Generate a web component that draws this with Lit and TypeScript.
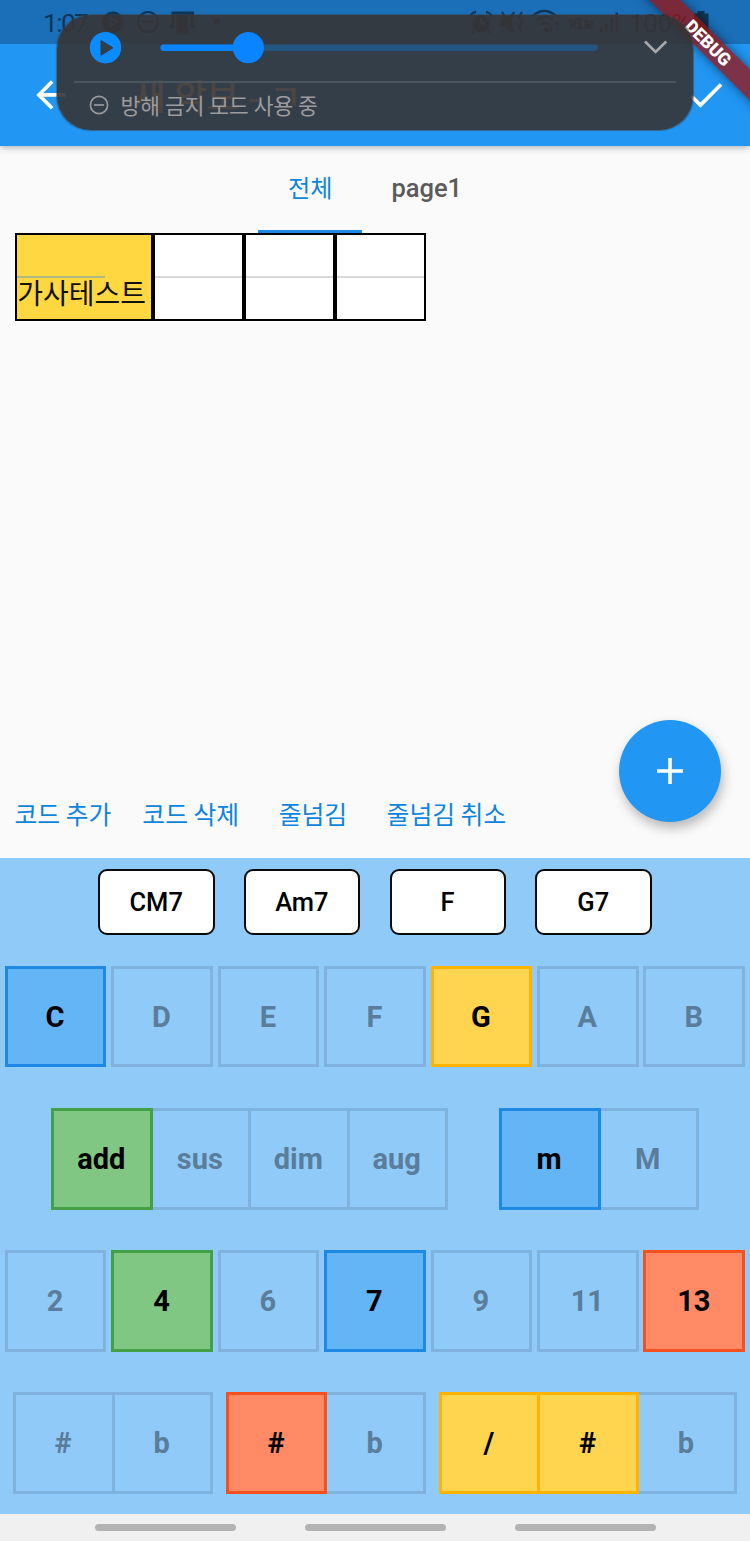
import { LitElement, html, css, svg } from "lit";
import { customElement, property } from "lit/decorators.js";
import { classMap } from "lit/directives/class-map.js";

type Tone = "off" | "blue" | "green" | "amber" | "red";
type KeyDef = [string, Tone];

const ROWS: KeyDef[][][] = [
  [[["C", "blue"]], [["D", "off"]], [["E", "off"]], [["F", "off"]], [["G", "amber"]], [["A", "off"]], [["B", "off"]]],
  [
    [["add", "green"], ["sus", "off"], ["dim", "off"], ["aug", "off"]],
    [["m", "blue"], ["M", "off"]],
  ],
  [[["2", "off"]], [["4", "green"]], [["6", "off"]], [["7", "blue"]], [["9", "off"]], [["11", "off"]], [["13", "red"]]],
  [
    [["#", "off"], ["b", "off"]],
    [["#", "red"], ["b", "off"]],
    [["/", "amber"], ["#", "amber"], ["b", "off"]],
  ],
];

@customElement("chord-keyboard")
export class ChordKeyboard extends LitElement {
  @property({ attribute: false }) presets: string[] = ["CM7", "Am7", "F", "G7"];

  static styles = css`
    :host {
      display: flex;
      flex-direction: column;
      box-sizing: border-box;
      height: 656px;
      padding-top: 11px;
      background: #90caf9;
      font-family: Roboto, sans-serif;
    }
    .presets {
      display: flex;
      justify-content: center;
      gap: 29.2px;
      margin-bottom: 30.6px;
    }
    .preset {
      box-sizing: border-box;
      width: 116.5px;
      height: 66px;
      padding-right: 0.6px;
      border: 2px solid #0a0a0a;
      border-radius: 9px;
      background: #fff;
      color: #000;
      font-size: 25.5px;
      font-weight: 500;
      line-height: 62px;
      text-align: center;
    }
    .row {
      display: flex;
      justify-content: space-evenly;
      margin-bottom: 40.4px;
    }
    .group {
      display: flex;
    }
    .key {
      box-sizing: border-box;
      width: 98.4px;
      height: 101.8px;
      padding-right: 1.2px;
      border: 3px solid;
      border-left-width: 0;
      font-size: 29px;
      font-weight: 700;
      line-height: 96px;
      text-align: center;
    }
    .key.first {
      width: 101.8px;
      border-left-width: 3px;
    }
    .off {
      border-color: #7fb2dd;
      color: #597d9a;
    }
    .blue {
      border-color: #1e88e5;
      background: #64b5f6;
    }
    .green {
      border-color: #43a047;
      background: #81c784;
    }
    .amber {
      border-color: #ffb300;
      background: #ffd54f;
    }
    .red {
      border-color: #f4511e;
      background: #ff8a65;
    }
  `;

  render() {
    return html`
      <div class="presets">${this.presets.map((p) => html`<div class="preset">${p}</div>`)}</div>
      ${ROWS.map(
        (row) => html`<div class="row">
          ${row.map(
            (group) => html`<div class="group">
              ${group.map(
                ([label, tone], i) =>
                  html`<div class=${classMap({ key: true, first: i === 0, [tone]: true })}>${label}</div>`
              )}
            </div>`
          )}
        </div>`
      )}
    `;
  }
}

@customElement("volume-panel")
export class VolumePanel extends LitElement {
  static styles = css`
    :host {
      display: flex;
      flex-direction: column;
      box-sizing: border-box;
      width: 636px;
      height: 114.5px;
      padding: 0 17px;
      border-radius: 34px;
      background: rgba(54, 52, 53, 0.9);
      box-shadow: 0 0 1px 0.5px rgba(60, 70, 80, 0.6);
    }
    .media {
      display: flex;
      align-items: center;
      height: 66px;
      border-bottom: 2px solid #4a565e;
    }
    .media svg,
    .notice svg {
      display: block;
      flex: none;
    }
    .notice {
      display: flex;
      align-items: center;
      gap: 12px;
      height: 43px;
      padding-left: 14.5px;
      color: #9c9c9e;
      font: 400 21.5px/43px "Noto Sans CJK KR", sans-serif;
      white-space: nowrap;
    }
  `;

  render() {
    return html`
      <div class="media">
        <svg width="602" height="66" viewBox="74 15 602 66">
          <circle cx="105.5" cy="47.7" r="15.7" fill="#0a8cff" />
          <path d="M101 40.5 L113 47.8 L101 55.2 Z" fill="#2f3d49" stroke="#2f3d49" stroke-linejoin="round" />
          <rect x="160.5" y="44.4" width="437" height="6.6" rx="3" fill="#245482" />
          <rect x="160.5" y="44.4" width="90" height="6.6" rx="3" fill="#0a84ff" />
          <circle cx="248.3" cy="47.6" r="15.6" fill="#0a84ff" />
          <path d="M645 41.5 L655.6 52 L666.3 41.5" fill="none" stroke="#a6a8aa" stroke-width="2.6" />
        </svg>
      </div>
      <div class="notice">
        <svg width="20" height="20" viewBox="0 0 20 20" fill="none" stroke="#97999b" stroke-width="1.7">
          <circle cx="10" cy="10" r="8.6" />
          <path d="M5 10 H15" />
        </svg>
        <span>방해 금지 모드 사용 중</span>
      </div>
    `;
  }
}

const statusIcons = svg`
  <g fill="#0d3557" stroke="none">
    <circle cx="113" cy="22" r="10.6" />
    <path d="M109.5 16 L119 22 L109.5 28 Z" fill="#1a6fb8" />
    <path d="M110.5 19.5 L115.5 22 L110.5 25 Z" />
    <path d="M171.5 11.5 H194 V26 H196 V28 H190.5 V15 H188 V34.5 H176.5 V15 H174.5 V28 H169 V26 H171.5 Z" />
    <circle cx="217" cy="21.5" r="3.2" />
    <circle cx="481" cy="23.5" r="8.8" />
    <path d="M500.5 19 H505 L512 13.5 V33 L505 27 H500.5 Z" />
    <path d="M543 30 L546.5 26.5 L550 30 L546.5 33 Z" />
    <rect x="600" y="28" width="3" height="4" />
    <rect x="605" y="23" width="2.5" height="9" />
    <rect x="610.5" y="18" width="2.5" height="14" />
    <rect x="615.5" y="12.5" width="2.5" height="19.5" />
    <path d="M697.5 11 H704.5 V13.5 H708.5 V33 H694 V13.5 H697.5 Z" />
  </g>
  <g fill="none" stroke="#0d3557" stroke-width="2.2">
    <circle cx="148" cy="22" r="10" />
    <path d="M142 22 H154" />
    <path d="M470 16.5 Q472 12.5 476 11.8 M486 11.8 Q490 12.5 492 16.5 M474 31.5 L472 33 M488 31.5 L490 33" />
    <path d="M481 18 V23.5 H485" stroke="#1a6fb8" />
    <path d="M502 12 L514 32 M514 12 L512 17 M522 12 L519 17 L522 22 L519 27 L522 32" />
    <path d="M532.5 16 Q544 6 556.5 16 M536.5 20.5 Q545 13 553 20.5 M540 25 Q545 21 550 25" />
    <path d="M551 26 V32 M557 30 V22 M554.5 24.5 L557 22 L559.5 24.5" stroke-width="1.5" />
  </g>
`;

@customElement("app-root")
export class AppRoot extends LitElement {
  static styles = css`
    :host {
      display: flex;
      flex-direction: column;
      position: relative;
      width: 750px;
      height: 1541px;
      overflow: hidden;
      background: #fafafa;
      font-family: Roboto, "Noto Sans CJK KR", sans-serif;
    }
    .header {
      position: relative;
      flex: none;
      height: 146px;
      overflow: hidden;
      background: #2196f3;
    }
    .header-wrap {
      position: relative;
      flex: none;
      box-shadow: 0 1px 7px rgba(0, 0, 0, 0.34);
    }
    .status {
      height: 43.5px;
      background: #1a6fb8;
    }
    .status svg {
      display: block;
    }
    .status text {
      fill: #0d3557;
      font-family: Roboto, sans-serif;
    }
    .clock {
      font-size: 26.5px;
      font-weight: 400;
    }
    .net {
      font-size: 14px;
      font-weight: 700;
    }
    .bar {
      display: flex;
      align-items: center;
      box-sizing: border-box;
      height: 102px;
      padding: 0 22.5px 0 28.8px;
    }
    .title {
      flex: 1;
      margin-left: 61px;
      color: #ffe6c4;
      font: 500 35px/50px "Noto Sans CJK KR", sans-serif;
      word-spacing: 1px;
    }
    .ribbon {
      position: absolute;
      top: 32.3px;
      left: 608.2px;
      width: 200px;
      height: 22px;
      background: rgba(157, 16, 15, 0.74);
      box-shadow: 0 0 11px rgba(0, 0, 0, 0.5);
      color: #fff;
      font: 900 17.8px/22.5px Roboto, sans-serif;
      text-align: center;
      transform: rotate(45deg);
    }
    .overlay {
      position: absolute;
      top: 15px;
      left: 57px;
    }
    .tabs {
      display: flex;
      justify-content: center;
      flex: none;
      height: 87px;
    }
    .tab {
      box-sizing: border-box;
      height: 87px;
      padding: 0 29.5px;
      color: #5b5b5b;
      font-size: 25.5px;
      font-weight: 500;
      line-height: 85px;
    }
    .tab.active {
      border-bottom: 3px solid #1e88e5;
      color: #0d86dd;
      font: 400 24.2px/82px "Noto Sans CJK KR", sans-serif;
    }
    .score {
      display: flex;
      flex: 1;
      align-items: flex-start;
      padding-left: 14.6px;
    }
    .cell {
      display: grid;
      grid-template-rows: 41px 2px 1fr;
      box-sizing: border-box;
      width: 91.1px;
      height: 88px;
      border: 2px solid #000;
      background: #fff;
    }
    .cell.filled {
      width: 138.5px;
      background: #ffd740;
    }
    .staff {
      grid-row: 2;
      background: #d9d9d9;
    }
    .filled .staff {
      width: 88px;
      background: #a9ba84;
    }
    .lyric {
      grid-row: 3;
      margin-left: 0.6px;
      color: #111;
      font: 400 28px/28px "Noto Sans CJK KR", sans-serif;
      white-space: nowrap;
    }
    .actions {
      display: flex;
      align-items: center;
      flex: none;
      box-sizing: border-box;
      height: 88px;
      padding: 0 0 2px 14.5px;
      color: #0d84dd;
      font: 400 24.8px/36px "Noto Sans CJK KR", sans-serif;
      white-space: nowrap;
    }
    .action + .action {
      margin-left: 31px;
    }
    .action.wide + .action,
    .action.wide {
      margin-left: 39.5px;
    }
    .fab {
      position: absolute;
      top: 719.7px;
      left: 618.8px;
      width: 102px;
      height: 102px;
      border-radius: 50%;
      background: #2196f3;
      box-shadow: 2px 6px 12px rgba(0, 0, 0, 0.27);
    }
    .fab svg {
      display: block;
    }
    .nav {
      display: flex;
      justify-content: center;
      gap: 69px;
      flex: none;
      height: 27px;
      background: #f0f0f0;
    }
    .pill {
      width: 141px;
      height: 7px;
      margin-top: 10px;
      border-radius: 3.5px;
      background: #b3b3b3;
    }
  `;

  render() {
    return html`
      <div class="header-wrap">
        <div class="header">
          <div class="status">
            <svg width="750" height="43" viewBox="0 0 750 43">
              ${statusIcons}
              <text class="clock" x="43" y="32" textLength="46">1:07</text>
              <text class="net" x="567" y="29" textLength="27">16Lte</text>
              <text class="clock" x="629" y="32" textLength="62">100%</text>
            </svg>
          </div>
          <div class="bar">
            <svg width="43.8" height="43.8" viewBox="0 0 24 24" fill="#fff">
              <path d="M20 11H7.83l5.59-5.59L12 4l-8 8 8 8 1.41-1.41L7.83 13H20v-2z" />
            </svg>
            <div class="title">새 악보 - ㄱ</div>
            <svg width="43.8" height="43.8" viewBox="0 0 24 24" fill="#fff">
              <path d="M9 16.17L4.83 12l-1.42 1.41L9 19 21 7l-1.41-1.41z" />
            </svg>
          </div>
          <div class="ribbon">DEBUG</div>
          <volume-panel class="overlay"></volume-panel>
        </div>
      </div>
      <div class="tabs">
        <div class="tab active">전체</div>
        <div class="tab">page1</div>
      </div>
      <div class="score">
        <div class="cell filled">
          <div class="staff"></div>
          <div class="lyric">가사테스트</div>
        </div>
        ${[1, 2, 3].map(() => html`<div class="cell"><div class="staff"></div></div>`)}
      </div>
      <div class="actions">
        <div class="action">코드 추가</div>
        <div class="action">코드 삭제</div>
        <div class="action wide">줄넘김</div>
        <div class="action">줄넘김 취소</div>
      </div>
      <chord-keyboard></chord-keyboard>
      <div class="nav">
        <div class="pill"></div>
        <div class="pill"></div>
        <div class="pill"></div>
      </div>
      <div class="fab">
        <svg width="102" height="102" viewBox="0 0 102 102">
          <path d="M51 38 V64 M38 51 H64" stroke="#fff" stroke-width="3.6" />
        </svg>
      </div>
    `;
  }
}
